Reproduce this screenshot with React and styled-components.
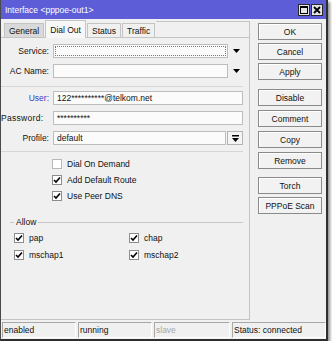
import styled, { createGlobalStyle } from 'styled-components';

const GlobalStyle = createGlobalStyle`
  html, body {
    margin: 0;
    padding: 0;
    background: #ffffff;
  }
  body {
    font-family: "Liberation Sans", Arial, sans-serif;
    font-size: 8.5px;
    color: #111;
  }
  * {
    box-sizing: border-box;
  }
`;

const Window = styled.div`
  width: 328px;
  display: flex;
  flex-direction: column;
  background: #f0f0f0;
  border-left: 1px solid #4a4a4a;
  border-right: 2px solid #2f2f2f;
  border-bottom: 2px solid #2f2f2f;
  box-shadow: 2px 2px 3px rgba(0, 0, 0, 0.45);
`;

const TitleBar = styled.div`
  height: 19px;
  display: flex;
  align-items: center;
  padding: 0 3px 0 4px;
  background: #5d5dd7;
  color: #fff;
`;

const Title = styled.span`
  flex: 1;
  white-space: nowrap;
`;

const TitleButton = styled.div`
  width: 12px;
  height: 12px;
  margin-left: 1px;
  display: flex;
  align-items: center;
  justify-content: center;
  background: #e4e4e4;
  border: 1px solid #2a2a2a;
`;

const Main = styled.div`
  height: 301px;
  display: flex;
`;

const LeftPane = styled.div`
  width: 249px;
  margin-top: 2px;
  display: flex;
  flex-direction: column;
  border-right: 1px solid #c4c4c4;
  border-bottom: 1px solid #c4c4c4;
`;

const TabStrip = styled.div`
  height: 17px;
  display: flex;
  align-items: flex-end;
  gap: 1px;
  padding-left: 3px;
  border-bottom: 1px solid #c4c4c4;
`;

const Tab = styled.div`
  height: ${p => (p.$active ? '18px' : '14px')};
  margin-bottom: ${p => (p.$active ? '-1px' : '0')};
  padding: 0 4px;
  display: flex;
  align-items: center;
  white-space: nowrap;
  border: 1px solid #c4c4c4;
  border-bottom: none;
  background: ${p => (p.$active ? '#f7f7f7' : p.$hover ? '#d9d9d9' : '#f0f0f0')};
`;

const TabFiller = styled.div`
  flex: 1;
  align-self: stretch;
  border-top: 1px solid #c4c4c4;
`;

const Panel = styled.div`
  flex: 1;
  padding: 6px 6px 0 0;
  display: flex;
  flex-direction: column;
`;

const FormGrid = styled.div`
  display: grid;
  grid-template-columns: 48px 1fr;
  column-gap: 4px;
  row-gap: 6px;
  align-items: center;
`;

const Label = styled.div`
  text-align: ${p => (p.$left ? 'left' : 'right')};
  letter-spacing: ${p => (p.$left ? '0.3px' : '0')};
  white-space: nowrap;
  color: ${p => (p.$accent ? '#3c3cc8' : '#111')};
`;

const FieldRow = styled.div`
  display: flex;
  gap: 1px;
  height: 14px;
`;

const Input = styled.div`
  flex: 1;
  height: 14px;
  padding-left: 3px;
  display: flex;
  align-items: center;
  white-space: nowrap;
  background: #fbfbfb;
  border: 1px solid #bdbdbd;
  outline: ${p => (p.$focus ? '1px dotted #7a7a7a' : 'none')};
  outline-offset: -3px;
`;

const ArrowCell = styled.div`
  width: 14px;
  display: flex;
  align-items: center;
  justify-content: center;
`;

const SmallButton = styled.div`
  width: 16px;
  display: flex;
  align-items: center;
  justify-content: center;
  background: #f4f4f4;
  border: 1px solid #b4b4b4;
`;

const Separator = styled.div`
  height: 1px;
  margin: ${p => p.$margin};
  background: #d6d6d6;
`;

const CheckList = styled.div`
  display: flex;
  flex-direction: column;
  padding-left: 51px;
`;

const CheckRow = styled.div`
  height: 16px;
  display: flex;
  align-items: center;
  gap: 5px;
  white-space: nowrap;
`;

const Box = styled.div`
  width: 10px;
  height: 10px;
  display: flex;
  align-items: center;
  justify-content: center;
  background: #fff;
  border: 1px solid ${p => (p.$checked ? '#8c8c8c' : '#b8b8b8')};
`;

const GroupHeader = styled.div`
  height: 12px;
  margin-top: 12px;
  display: flex;
  align-items: center;
  padding-left: 9px;
  gap: 2px;
`;

const GroupLine = styled.div`
  height: 1px;
  width: ${p => p.$width || 'auto'};
  flex: ${p => (p.$width ? 'none' : '1')};
  background: #c8c8c8;
`;

const GroupGrid = styled.div`
  display: grid;
  grid-template-columns: 115px 1fr;
  grid-auto-rows: 17px;
  padding: 2px 0 0 13px;
`;

const SideBar = styled.div`
  flex: 1;
  display: flex;
  flex-direction: column;
  padding: 4px 0 0 8px;
`;

const ButtonGroup = styled.div`
  display: flex;
  flex-direction: column;
  gap: ${p => p.$gap};
  margin-top: ${p => p.$top};
`;

const Button = styled.div`
  width: 64px;
  height: 17px;
  display: flex;
  align-items: center;
  justify-content: center;
  white-space: nowrap;
  background: #f2f2f2;
  border: 1px solid #8a8a8a;
  box-shadow: inset 1px 1px 0 #ffffff;
`;

const StatusBar = styled.div`
  height: 19px;
  display: grid;
  grid-template-columns: 74px 74px 76px 1fr;
  column-gap: 2px;
  padding: 2px 0 1px 1px;
`;

const StatusCell = styled.div`
  display: flex;
  align-items: center;
  padding-left: 1px;
  white-space: nowrap;
  color: ${p => (p.$dim ? '#a8a8a8' : '#111')};
  border-top: 1px solid #a8a8a8;
  border-left: 1px solid #a8a8a8;
  border-right: 1px solid #ffffff;
  border-bottom: 1px solid #ffffff;
`;

const DropArrow = () => (
  <svg width="7" height="4" viewBox="0 0 7 4">
    <polygon points="0,0 7,0 3.5,4" fill="#000" />
  </svg>
);

const Check = () => (
  <svg width="8" height="8" viewBox="0 0 8 8">
    <path d="M1 4 L3 6 L7 1.5" stroke="#000" strokeWidth="1.6" fill="none" />
  </svg>
);

const CheckItem = ({ checked, label }) => (
  <CheckRow>
    <Box $checked={checked}>{checked && <Check />}</Box>
    {label}
  </CheckRow>
);

const App = () => {
  return (
    <>
      <GlobalStyle />
      <Window>
        <TitleBar>
          <Title>Interface &lt;pppoe-out1&gt;</Title>
          <TitleButton>
            <svg width="8" height="8" viewBox="0 0 8 8">
              <rect x="0.5" y="0.5" width="7" height="7" fill="none" stroke="#000" />
              <rect x="0" y="0" width="8" height="2" fill="#000" />
            </svg>
          </TitleButton>
          <TitleButton>
            <svg width="8" height="8" viewBox="0 0 8 8">
              <path d="M1 1 L7 7 M7 1 L1 7" stroke="#000" strokeWidth="1.8" />
            </svg>
          </TitleButton>
        </TitleBar>

        <Main>
          <LeftPane>
            <TabStrip>
              <Tab $hover>General</Tab>
              <Tab $active>Dial Out</Tab>
              <Tab>Status</Tab>
              <Tab>Traffic</Tab>
              <TabFiller />
            </TabStrip>

            <Panel>
              <FormGrid>
                <Label>Service:</Label>
                <FieldRow>
                  <Input $focus />
                  <ArrowCell><DropArrow /></ArrowCell>
                </FieldRow>
                <Label>AC Name:</Label>
                <FieldRow>
                  <Input />
                  <ArrowCell><DropArrow /></ArrowCell>
                </FieldRow>
              </FormGrid>

              <Separator $margin="8px 0 4px 0" />

              <FormGrid>
                <Label $accent>User:</Label>
                <FieldRow>
                  <Input>122**********@telkom.net</Input>
                </FieldRow>
                <Label $left>Password:</Label>
                <FieldRow>
                  <Input>**********</Input>
                </FieldRow>
                <Label>Profile:</Label>
                <FieldRow>
                  <Input>default</Input>
                  <SmallButton>
                    <svg width="7" height="7" viewBox="0 0 7 7">
                      <rect x="0" y="0" width="7" height="1.5" fill="#000" />
                      <polygon points="0,3 7,3 3.5,7" fill="#000" />
                    </svg>
                  </SmallButton>
                </FieldRow>
              </FormGrid>

              <Separator $margin="6px 0 4px 0" />

              <CheckList>
                <CheckItem label="Dial On Demand" />
                <CheckItem checked label="Add Default Route" />
                <CheckItem checked label="Use Peer DNS" />
              </CheckList>

              <GroupHeader>
                <GroupLine $width="4px" />
                <span>Allow</span>
                <GroupLine />
              </GroupHeader>

              <GroupGrid>
                <CheckItem checked label="pap" />
                <CheckItem checked label="chap" />
                <CheckItem checked label="mschap1" />
                <CheckItem checked label="mschap2" />
              </GroupGrid>
            </Panel>
          </LeftPane>

          <SideBar>
            <ButtonGroup $gap="3px" $top="0">
              <Button>OK</Button>
              <Button>Cancel</Button>
              <Button>Apply</Button>
            </ButtonGroup>
            <ButtonGroup $gap="4px" $top="9px">
              <Button>Disable</Button>
              <Button>Comment</Button>
              <Button>Copy</Button>
              <Button>Remove</Button>
            </ButtonGroup>
            <ButtonGroup $gap="3px" $top="8px">
              <Button>Torch</Button>
              <Button>PPPoE Scan</Button>
            </ButtonGroup>
          </SideBar>
        </Main>

        <StatusBar>
          <StatusCell>enabled</StatusCell>
          <StatusCell>running</StatusCell>
          <StatusCell $dim>slave</StatusCell>
          <StatusCell>Status: connected</StatusCell>
        </StatusBar>
      </Window>
    </>
  );
};

export default App;
